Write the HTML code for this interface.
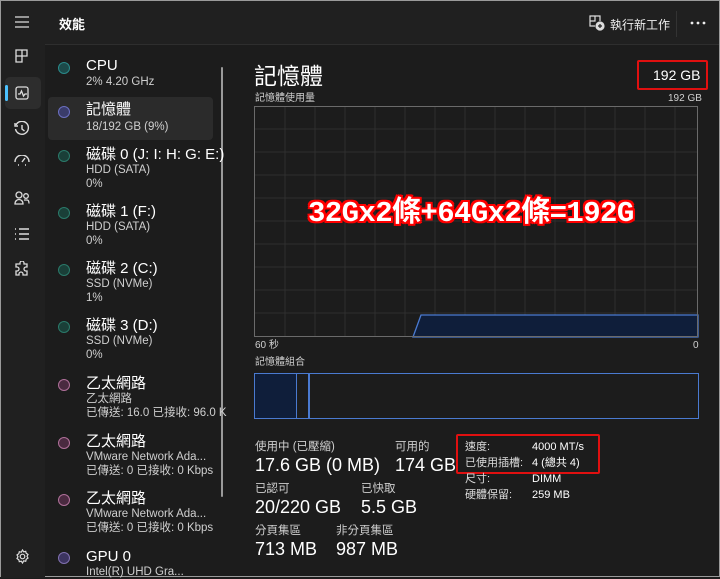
<!DOCTYPE html>
<html><head><meta charset="utf-8"><style>
*{margin:0;padding:0;box-sizing:border-box}
body{width:720px;height:577px;background:#1c1c1c;font-family:"Liberation Sans","Noto Sans CJK TC",sans-serif;color:#fff;position:relative;overflow:hidden;border:1px solid #9a9a9a}
.a{position:absolute;white-space:nowrap}
.rail{position:absolute;left:0;top:0;width:44px;height:577px;background:#202020}
.top{position:absolute;left:44px;top:0;right:0;height:44px;background:#202020;border-bottom:1px solid #2e2e2e}
.dot{position:absolute;width:12px;height:12px;border-radius:50%;border:1.5px solid}
.t1{font-size:15px;color:#fff;line-height:18px}
.t2{font-size:11.5px;color:#cfcfcf;line-height:14px}
.lbl{font-size:11.5px;color:#cfcfcf;line-height:14px}
.big{font-size:18px;color:#fff;line-height:20px}
</style></head><body>
<div class="rail"></div>
<div class="top"></div>
<svg class="a" style="left:13px;top:14px" width="16" height="14" stroke="#ddd" stroke-width="1.3" fill="none"><path d="M1 2h14M1 7h14M1 12h14"/></svg>
<svg class="a" style="left:14px;top:48px" width="14" height="14" stroke="#ddd" stroke-width="1.3" fill="none"><path d="M1 1h6v6H1zM7 1h5v6H7zM1 7h6v6H1z"/></svg>
<div class="a" style="left:4px;top:76px;width:36px;height:32px;background:#2d2d2d;border-radius:5px"></div>
<div class="a" style="left:4px;top:84px;width:3px;height:16px;background:#4cc2ff;border-radius:2px"></div>
<svg class="a" style="left:14px;top:85px" width="14" height="14" stroke="#ddd" stroke-width="1.3" fill="none"><rect x="1" y="1" width="12" height="12" rx="2"/><path d="M3 8h2l1.5-3 2 5 1.5-2h2"/></svg>
<svg class="a" style="left:13px;top:120px" width="16" height="16" stroke="#ddd" stroke-width="1.4" fill="none"><path d="M2 4A6.5 6.5 0 1 1 1.5 8"/><path d="M1 2v3h3M8 4v4l2.5 2"/></svg>
<svg class="a" style="left:12px;top:154px" width="18" height="12" stroke="#ddd" stroke-width="1.4" fill="none"><path d="M2 7a7 7 0 0 1 14 0M9 7l3-4M5 10h1M12 10h1"/></svg>
<svg class="a" style="left:13px;top:189px" width="16" height="16" stroke="#ddd" stroke-width="1.3" fill="none"><circle cx="5" cy="5" r="3"/><circle cx="12" cy="6" r="2.3"/><path d="M1 14c0-3 2-4.5 4-4.5s4 1.5 4 4.5zM10 10h3c1.5 0 2 1.5 2 3.5"/></svg>
<svg class="a" style="left:13px;top:226px" width="16" height="14" stroke="#ddd" stroke-width="1.4" fill="none"><path d="M1 2h1M1 7h1M1 12h1M5 2h10M5 7h10M5 12h10"/></svg>
<svg class="a" style="left:13px;top:260px" width="16" height="17" stroke="#ddd" stroke-width="1.3" fill="none"><path d="M6 2a2 2 0 0 1 4 0v1h3v3h-1a2 2 0 0 0 0 4h1v4H9v-1a2 2 0 0 0-4 0v1H2v-4h1a2 2 0 0 0 0-4H2V3h4z"/></svg>
<svg class="a" style="left:14px;top:548px" width="15" height="15" stroke="#ddd" stroke-width="1.2" fill="none"><circle cx="7.5" cy="7.5" r="2.3"/><path d="M7.5 1l1.2 1.8 2-.5.5 2 1.8 1.2-1 1.8 1 1.8-1.8 1.2-.5 2-2-.5L7.5 14l-1.2-1.8-2 .5-.5-2-1.8-1.2 1-1.8-1-1.8 1.8-1.2.5-2 2 .5z"/></svg>

<div class="a" style="left:58px;top:13px;font-size:13px;font-weight:bold">效能</div>
<svg class="a" style="left:588px;top:14px" width="16" height="16" stroke="#ddd" stroke-width="1.2" fill="none"><path d="M1 1h5v5H1zM6 1h5v5M1 6v5h5"/><circle cx="11" cy="11" r="4" fill="#ddd"/><path d="M11 9v4M9 11h4" stroke="#202020"/></svg>
<div class="a" style="left:609px;top:15px;font-size:12px;color:#eee">執行新工作</div>
<div class="a" style="left:675px;top:10px;width:1px;height:26px;background:#333"></div>
<svg class="a" style="left:689px;top:20px" width="16" height="4" fill="#eee"><circle cx="2" cy="2" r="1.4"/><circle cx="8" cy="2" r="1.4"/><circle cx="14" cy="2" r="1.4"/></svg>

<div class="a" style="left:220px;top:66px;width:2px;height:430px;background:#9a9a9a;border-radius:1px"></div>
<div class="a" style="left:47px;top:96px;width:165px;height:43px;background:#2b2b2b;border-radius:4px"></div>
<div class="dot" style="left:57px;top:61px;border-color:#2a8a8a;background:#1c4a4a"></div>
<div class="a t1" style="left:85px;top:56px">CPU</div><div class="a t2" style="left:85px;top:74px">2% 4.20 GHz</div>
<div class="dot" style="left:57px;top:105px;border-color:#6b6fc0;background:#3a3c6a"></div>
<div class="a t1" style="left:85px;top:100px">記憶體</div><div class="a t2" style="left:85px;top:119px">18/192 GB (9%)</div>
<div class="dot" style="left:57px;top:149px;border-color:#2a7a6a;background:#1a3f38"></div>
<div class="a t1" style="left:85px;top:145px">磁碟 0 (J: I: H: G: E:)</div><div class="a t2" style="left:85px;top:162px">HDD (SATA)<br>0%</div>
<div class="dot" style="left:57px;top:206px;border-color:#2a7a6a;background:#1a3f38"></div>
<div class="a t1" style="left:85px;top:202px">磁碟 1 (F:)</div><div class="a t2" style="left:85px;top:219px">HDD (SATA)<br>0%</div>
<div class="dot" style="left:57px;top:263px;border-color:#2a7a6a;background:#1a3f38"></div>
<div class="a t1" style="left:85px;top:259px">磁碟 2 (C:)</div><div class="a t2" style="left:85px;top:276px">SSD (NVMe)<br>1%</div>
<div class="dot" style="left:57px;top:320px;border-color:#2a7a6a;background:#1a3f38"></div>
<div class="a t1" style="left:85px;top:316px">磁碟 3 (D:)</div><div class="a t2" style="left:85px;top:333px">SSD (NVMe)<br>0%</div>
<div class="dot" style="left:57px;top:378px;border-color:#b0709a;background:#4a2a40"></div>
<div class="a t1" style="left:85px;top:374px">乙太網路</div><div class="a t2" style="left:85px;top:391px">乙太網路<br>已傳送: 16.0 已接收: 96.0 K</div>
<div class="dot" style="left:57px;top:436px;border-color:#b0709a;background:#4a2a40"></div>
<div class="a t1" style="left:85px;top:432px">乙太網路</div><div class="a t2" style="left:85px;top:449px">VMware Network Ada...<br>已傳送: 0 已接收: 0 Kbps</div>
<div class="dot" style="left:57px;top:493px;border-color:#b0709a;background:#4a2a40"></div>
<div class="a t1" style="left:85px;top:489px">乙太網路</div><div class="a t2" style="left:85px;top:506px">VMware Network Ada...<br>已傳送: 0 已接收: 0 Kbps</div>
<div class="dot" style="left:57px;top:551px;border-color:#8070b0;background:#3c3460"></div>
<div class="a t1" style="left:85px;top:547px">GPU 0</div><div class="a t2" style="left:85px;top:564px">Intel(R) UHD Gra...</div>

<div class="a" style="left:253px;top:56px;font-size:23px">記憶體</div>
<div class="a" style="left:636px;top:59px;width:71px;height:30px;border:2px solid #e01010;border-radius:2px"></div>
<div class="a" style="left:652px;top:66px;font-size:14px">192 GB</div>
<div class="a lbl" style="left:254px;top:91px;font-size:10px">記憶體使用量</div>
<div class="a lbl" style="left:667px;top:91px;font-size:10px">192 GB</div>
<svg class="a" style="left:253px;top:105px" width="445" height="232">
<g stroke="#2e2e2e" stroke-width="1">
<path d="M31 0v231M61 0v231M91 0v231M121 0v231M151 0v231M181 0v231M211 0v231M241 0v231M271 0v231M301 0v231M331 0v231M361 0v231M391 0v231M421 0v231"/>
<path d="M0 23h444M0 46h444M0 69h444M0 92h444M0 115h444M0 138h444M0 161h444M0 184h444M0 207h444"/>
</g>
<path d="M159 231L167 209H444V231Z" fill="#0f1e3a" stroke="#4a7ad0" stroke-width="1.3"/>
<rect x="0.5" y="0.5" width="443" height="230" fill="none" stroke="#6a6a6a"/>
</svg>
<div class="a" style="left:307px;top:196px;font-size:29px;line-height:34px;font-weight:bold;color:#fff;font-family:'Liberation Mono','Noto Sans CJK TC',monospace;letter-spacing:-0.6px;text-shadow:2px 0 0 #f00,-2px 0 0 #f00,0 2px 0 #f00,0 -2px 0 #f00,2px 2px 0 #f00,-2px -2px 0 #f00,2px -2px 0 #f00,-2px 2px 0 #f00">32Gx2條+64Gx2條=192G</div>
<div class="a lbl" style="left:254px;top:338px;font-size:10px">60 秒</div>
<div class="a lbl" style="left:692px;top:338px;font-size:10px">0</div>
<div class="a lbl" style="left:254px;top:355px;font-size:10px">記憶體組合</div>
<div class="a" style="left:253px;top:372px;width:445px;height:46px;border:1px solid #4a7ad0"></div>
<div class="a" style="left:254px;top:373px;width:42px;height:44px;background:#0f1e3a;border-right:1.5px solid #4a7ad0"></div>
<div class="a" style="left:307px;top:373px;width:1.5px;height:44px;background:#4a7ad0"></div>

<div class="a lbl" style="left:254px;top:439px">使用中 (已壓縮)</div>
<div class="a big" style="left:254px;top:454px">17.6 GB (0 MB)</div>
<div class="a lbl" style="left:394px;top:439px">可用的</div>
<div class="a big" style="left:394px;top:454px">174 GB</div>
<div class="a lbl" style="left:254px;top:481px">已認可</div>
<div class="a big" style="left:254px;top:496px">20/220 GB</div>
<div class="a lbl" style="left:360px;top:481px">已快取</div>
<div class="a big" style="left:360px;top:496px">5.5 GB</div>
<div class="a lbl" style="left:254px;top:523px">分頁集區</div>
<div class="a big" style="left:254px;top:538px">713 MB</div>
<div class="a lbl" style="left:335px;top:523px">非分頁集區</div>
<div class="a big" style="left:335px;top:538px">987 MB</div>

<div class="a" style="left:455px;top:433px;width:144px;height:40px;border:2px solid #e01010;border-radius:2px"></div>
<div class="a" style="left:464px;top:438px;font-size:11px;color:#ddd;line-height:16px">速度:<br>已使用插槽:<br>尺寸:<br>硬體保留:</div>
<div class="a" style="left:531px;top:438px;font-size:11px;color:#fff;line-height:16px">4000 MT/s<br>4 (總共 4)<br>DIMM<br>259 MB</div>
</body></html>
